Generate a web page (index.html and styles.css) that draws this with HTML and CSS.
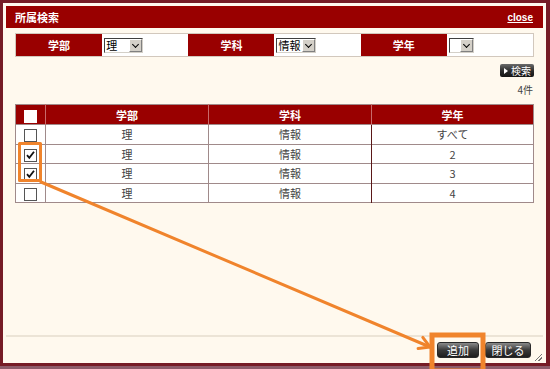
FILE: index.html
```html
<!DOCTYPE html>
<html lang="ja">
<head>
    <meta charset="UTF-8">
    <title>所属検索</title>
    <link rel="stylesheet" href="styles.css">
</head>
<body>
    <div class="dialog">
        <div class="titlebar">
            <span class="title">所属検索</span>
            <a class="close">close</a>
        </div>

        <div class="content">
            <div class="search-bar">
                <div class="label">学部</div>
                <div class="field"><span class="select w-bu"><span class="val">理</span><span class="arrow"></span></span></div>
                <div class="label">学科</div>
                <div class="field"><span class="select w-ka"><span class="val">情報</span><span class="arrow"></span></span></div>
                <div class="label">学年</div>
                <div class="field"><span class="select w-nen"><span class="val"></span><span class="arrow"></span></span></div>
            </div>

            <div class="search-row">
                <span class="btn-search"><span class="tri"></span>検索</span>
            </div>
            <div class="count">4件</div>

            <table class="results">
                <thead>
                    <tr>
                        <th class="col-cb"><span class="cb cb-head"></span></th>
                        <th class="col-bu">学部</th>
                        <th class="col-ka">学科</th>
                        <th class="col-nen">学年</th>
                    </tr>
                </thead>
                <tbody>
                    <tr>
                        <td class="col-cb"><span class="cb"></span></td>
                        <td>理</td>
                        <td class="sep">情報</td>
                        <td>すべて</td>
                    </tr>
                    <tr>
                        <td class="col-cb"><span class="cb checked"><svg width="11" height="11" viewBox="0 0 11 11"><path d="M2 5.2 L4.3 7.8 L9 1.8" fill="none" stroke="#111" stroke-width="1.8"/></svg></span></td>
                        <td>理</td>
                        <td class="sep">情報</td>
                        <td>2</td>
                    </tr>
                    <tr>
                        <td class="col-cb"><span class="cb checked"><svg width="11" height="11" viewBox="0 0 11 11"><path d="M2 5.2 L4.3 7.8 L9 1.8" fill="none" stroke="#111" stroke-width="1.8"/></svg></span></td>
                        <td>理</td>
                        <td class="sep">情報</td>
                        <td>3</td>
                    </tr>
                    <tr>
                        <td class="col-cb"><span class="cb"></span></td>
                        <td>理</td>
                        <td class="sep">情報</td>
                        <td>4</td>
                    </tr>
                </tbody>
            </table>
        </div>

        <div class="footer">
            <span class="btn">追加</span>
            <span class="btn btn-wide">閉じる</span>
            <span class="grip"></span>
        </div>
    </div>

    <!-- annotation overlay -->
    <svg class="annotation" width="550" height="369" viewBox="0 0 550 369">
        <g fill="none" stroke="#f0842c" stroke-linecap="round" stroke-linejoin="round">
            <rect x="19.5" y="143.5" width="21" height="37" stroke-width="3" stroke-linecap="butt"/>
            <line x1="41" y1="182" x2="430" y2="347" stroke-width="3"/>
            <polyline points="422.8,337.4 430,347 418.1,348.5" stroke-width="3"/>
            <rect x="432" y="335" width="51" height="36" stroke-width="5" stroke-linecap="butt" stroke-linejoin="miter"/>
        </g>
    </svg>
</body>
</html>
```

FILE: styles.css
```css
body {
    margin: 0;
    width: 550px;
    height: 369px;
    background-color: #8d5c6a;
    font-family: "Noto Sans CJK JP", "DejaVu Sans", sans-serif;
    font-size: 11px;
    color: #333;
    overflow: hidden;
    position: relative;
}
.dialog {
    box-sizing: border-box;
    width: 550px;
    height: 366px;
    border: 3px solid #761c26;
    border-right-width: 4px;
    background-color: #fff9ee;
    padding: 3px 3px 0;
    display: flex;
    flex-direction: column;
}
.titlebar {
    height: 22px;
    background-color: #990000;
    color: #fff;
    display: flex;
    align-items: center;
    justify-content: space-between;
    padding: 0 10px 0 9px;
}
.title {
    font-weight: bold;
    font-size: 11px;
}
.close {
    font-family: "Liberation Sans", sans-serif;
    font-weight: bold;
    font-size: 10px;
    text-decoration: underline;
}
.content {
    flex: 1;
    padding: 5px 9px 0;
}
.search-bar {
    display: grid;
    grid-template-columns: repeat(6, 1fr);
    height: 24px;
    border: 1px solid #d2c8bd;
    box-sizing: border-box;
}
.search-bar .label {
    background-color: #990000;
    color: #fff;
    font-weight: bold;
    display: flex;
    align-items: center;
    justify-content: center;
}
.search-bar .field {
    background-color: #fff;
    display: flex;
    align-items: center;
    padding-left: 2px;
}
.select {
    display: flex;
    height: 15px;
    box-sizing: border-box;
    border-top: 1px solid #404040;
    border-left: 1px solid #404040;
    border-right: 1px solid #d4d0c8;
    border-bottom: 1px solid #d4d0c8;
    background-color: #fff;
}
.select .val {
    flex: 1;
    color: #000;
    font-size: 11px;
    line-height: 13px;
    padding-left: 1px;
}
.select .arrow {
    width: 13px;
    box-sizing: border-box;
    background-color: #d4d0c8;
    border: 1px solid #808080;
    border-top-color: #fff;
    border-left-color: #fff;
    position: relative;
}
.select .arrow::after {
    content: "";
    position: absolute;
    left: 3px;
    top: 2px;
    width: 4px;
    height: 4px;
    border-right: 1.5px solid #000;
    border-bottom: 1.5px solid #000;
    transform: rotate(45deg);
}
.w-bu { width: 39px; }
.w-ka { width: 40px; }
.w-nen { width: 25px; }
.search-row {
    display: flex;
    justify-content: flex-end;
    margin-top: 7px;
}
.btn-search {
    display: flex;
    align-items: center;
    gap: 3px;
    height: 13px;
    padding: 0 3px 0 4px;
    border-radius: 2px;
    background: linear-gradient(#6a6a6a, #2a2a2a 55%, #151515);
    color: #fff;
    font-size: 10px;
}
.tri {
    width: 0;
    height: 0;
    border-left: 4px solid #fff;
    border-top: 3px solid transparent;
    border-bottom: 3px solid transparent;
}
.count {
    text-align: right;
    margin-top: 6px;
    padding-right: 1px;
    line-height: 14px;
    font-size: 10px;
    color: #444;
}
.results {
    margin-top: 7px;
    width: 519px;
    table-layout: fixed;
    border-collapse: collapse;
    background-color: #fff;
    border: 1px solid #a08a8a;
    color: #444;
}
.results th {
    background-color: #990000;
    color: #fff;
    font-weight: bold;
    height: 19px;
    padding: 0;
    border-left: 1px solid #c86a6a;
}
.results th:first-child {
    border-left: none;
}
.results td {
    height: 18.5px;
    padding: 0;
    text-align: center;
    border-top: 1px solid #a08a8a;
    border-left: 1px solid #a08a8a;
    line-height: 14px;
}
.results td.sep {
    border-right: 1px solid #5a1818;
}
.col-cb { width: 29px; }
.col-bu { width: 162px; }
.col-ka { width: 162px; }
.cb {
    display: inline-block;
    vertical-align: middle;
    width: 11px;
    height: 11px;
    border: 1px solid #555;
    background-color: #fff;
}
.cb svg {
    display: block;
}
.cb-head {
    border-color: #fff;
}
.footer {
    height: 26px;
    border-top: 2px solid #ece4d6;
    display: flex;
    align-items: center;
    justify-content: flex-end;
    gap: 6px;
    padding-right: 12px;
    position: relative;
}
.btn {
    display: flex;
    align-items: center;
    justify-content: center;
    width: 42px;
    height: 16px;
    box-sizing: border-box;
    border: 1px solid #2a2a2a;
    border-radius: 3px;
    background: linear-gradient(#8a8a8a, #3a3a3a 50%, #1e1e1e);
    color: #fff;
    font-size: 11px;
}
.btn-wide {
    width: 46px;
}
.grip {
    position: absolute;
    right: 1px;
    bottom: 2px;
    width: 7px;
    height: 7px;
    background: linear-gradient(135deg, transparent 45%, #777 45%, #777 55%, transparent 55%, transparent 70%, #777 70%, #777 80%, transparent 80%);
}
.annotation {
    position: absolute;
    left: 0;
    top: 0;
}
```
